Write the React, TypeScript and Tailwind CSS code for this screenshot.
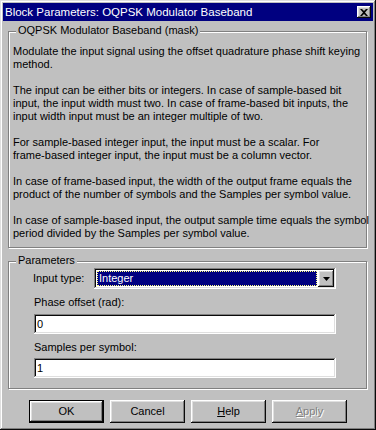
import React from "react";

const raised =
  "shadow-[inset_-1px_-1px_#0a0a0a,inset_1px_1px_#fff,inset_-2px_-2px_#808080,inset_2px_2px_#dfdfdf]";
const sunken =
  "shadow-[inset_-1px_-1px_#fff,inset_1px_1px_#808080,inset_-2px_-2px_#dfdfdf,inset_2px_2px_#0a0a0a]";

function GroupBox({
  title,
  className,
  children,
}: {
  title: string;
  className: string;
  children: React.ReactNode;
}) {
  return (
    <div
      className={`relative w-[359px] border border-[#808080] shadow-[inset_1px_1px_#fff,1px_1px_#fff] ${className}`}
    >
      {/* legend sits on the top edge */}
      <span className="absolute -top-[8px] left-[7px] bg-[#c0c0c0] px-[2px] leading-[13px]">
        {title}
      </span>
      {children}
    </div>
  );
}

function Button({
  children,
  isDefault,
  disabled,
}: {
  children: React.ReactNode;
  isDefault?: boolean;
  disabled?: boolean;
}) {
  return (
    <div
      className={`w-[75px] h-[23px] flex items-center justify-center bg-[#c0c0c0] ${raised} ${
        isDefault ? "border border-black" : ""
      } ${disabled ? "text-[#808080] [text-shadow:1px_1px_0_#fff]" : "text-black"}`}
    >
      {children}
    </div>
  );
}

const paragraphs = [
  [
    "Modulate the input signal using the offset quadrature phase shift keying",
    "method.",
  ],
  [
    "The input can be either bits or integers. In case of sample-based bit",
    "input, the input width must two. In case of frame-based bit inputs, the",
    "input width input must be an integer multiple of two.",
  ],
  [
    "For sample-based integer input, the input must be a scalar. For",
    "frame-based integer input, the input must be a column vector.",
  ],
  [
    "In case of frame-based input, the width of the output frame equals the",
    "product of the number of symbols and the Samples per symbol value.",
  ],
  [
    "In case of sample-based input, the output sample time equals the symbol",
    "period divided by the Samples per symbol value.",
  ],
];

export default function App() {
  return (
    <div
      className={`w-[376px] h-[430px] bg-[#c0c0c0] p-[3px] flex flex-col font-['Liberation_Sans',Arial,sans-serif] text-[11px] leading-[13px] text-black ${
        "shadow-[inset_-1px_-1px_#0a0a0a,inset_1px_1px_#dfdfdf,inset_-2px_-2px_#808080,inset_2px_2px_#fff]"
      }`}
    >
      {/* Title bar */}
      <div className="h-[18px] bg-[#000080] flex items-center justify-between pl-[2px] pr-[2px]">
        <span className="text-white text-[11.5px] leading-[18px] whitespace-nowrap">
          Block Parameters: OQPSK Modulator Baseband
        </span>
        <div className={`w-[14px] h-[12px] bg-[#c0c0c0] flex items-center justify-center ${raised}`}>
          <svg width="8" height="7" viewBox="0 0 8 7">
            <path d="M0 0h2l2 2 2-2h2L5 3.5 8 7H6L4 5 2 7H0l3-3.5z" fill="#000" />
          </svg>
        </div>
      </div>

      <div className="pl-[5px] mt-[10px]">
        <GroupBox title="OQPSK Modulator Baseband (mask)" className="h-[217px]">
          <div className="pt-[13px] pl-[4px] whitespace-nowrap flex flex-col gap-[13px]">
            {paragraphs.map((p, i) => (
              <div key={i}>
                {p.map((line, j) => (
                  <div key={j}>{line}</div>
                ))}
              </div>
            ))}
          </div>
        </GroupBox>

        <GroupBox title="Parameters" className="h-[128px] mt-[13px]">
          <div className="pt-[6px] pl-[24px] flex flex-col">
            <div className="flex items-center">
              <span className="w-[61px]">Input type:</span>
              <div className={`w-[242px] h-[21px] bg-white flex items-center p-[2px] ${sunken}`}>
                <div className="flex-1 h-[17px] p-[1px] bg-white">
                  <div className="h-full bg-[#000080] border border-dotted border-[#ffff7f] text-white flex items-center pl-[1px]">
                    Integer
                  </div>
                </div>
                <div className={`w-[16px] h-[17px] bg-[#c0c0c0] flex items-center justify-center ${raised}`}>
                  <svg width="7" height="4" viewBox="0 0 7 4">
                    <path d="M0 0h7L3.5 4z" fill="#000" />
                  </svg>
                </div>
              </div>
            </div>

            <span className="mt-[7px] pl-[1px]">Phase offset (rad):</span>
            <div className={`mt-[5px] ml-[1px] w-[302px] h-[20px] bg-white flex items-center pl-[3px] ${sunken}`}>
              0
            </div>

            <span className="mt-[7px] pl-[1px]">Samples per symbol:</span>
            <div className={`mt-[4px] ml-[1px] w-[302px] h-[20px] bg-white flex items-center pl-[3px] ${sunken}`}>
              1
            </div>
          </div>
        </GroupBox>
      </div>

      <div className="mt-[11px] pl-[26px] flex gap-[6px]">
        <Button isDefault>OK</Button>
        <Button>Cancel</Button>
        <Button>
          <span>
            <u>H</u>elp
          </span>
        </Button>
        <Button disabled>
          <span>
            <u>A</u>pply
          </span>
        </Button>
      </div>
    </div>
  );
}
